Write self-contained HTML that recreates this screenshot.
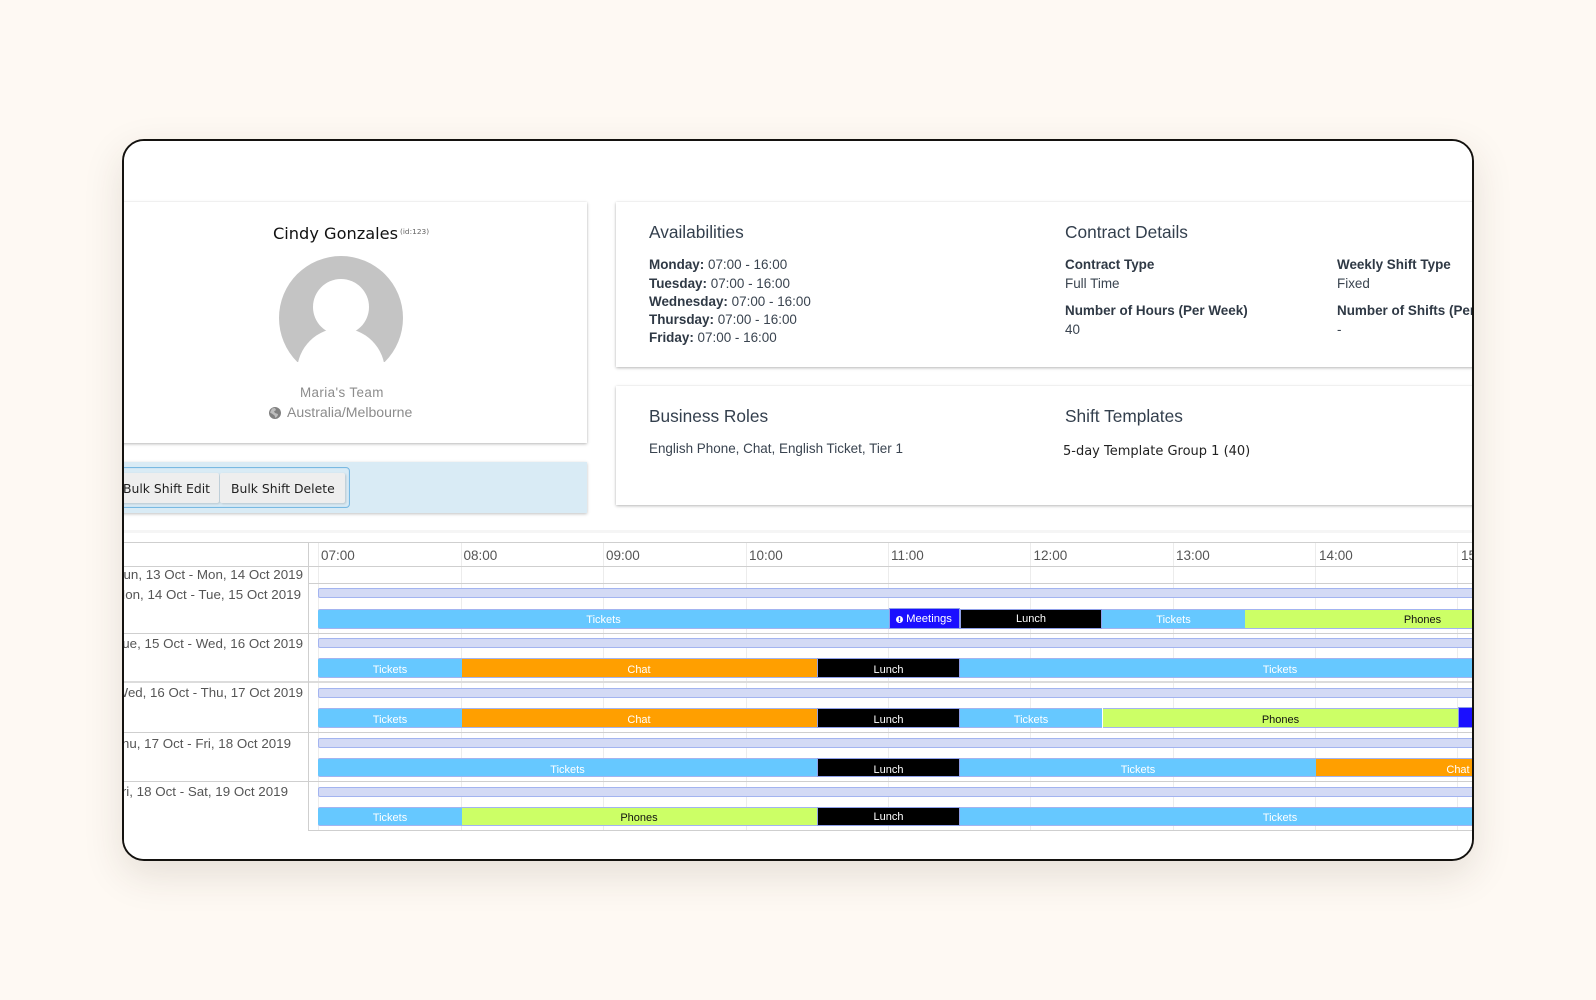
<!DOCTYPE html>
<html><head><meta charset="utf-8">
<style>
html,body{margin:0;padding:0;width:1596px;height:1000px;overflow:hidden;background:#fef9f3;}
*{box-sizing:border-box;}
#frame{position:absolute;left:122px;top:139px;width:1352px;height:722px;background:#fff;border:2px solid #14120f;border-radius:22px;box-shadow:0 14px 40px rgba(60,50,30,.13);}
#clip{position:absolute;left:124px;top:141px;width:1348px;height:718px;border-radius:20px;overflow:hidden;background:#fff;font-family:"Liberation Sans",sans-serif;color:#333f4d;}
#in{position:absolute;left:-124px;top:-141px;width:1596px;height:1000px;filter:blur(.3px);}
#in>div,#in>svg{position:absolute;}
.card{background:#fff;box-shadow:0 1px 3px rgba(0,0,0,.28),0 0 2px rgba(0,0,0,.06);}
.t{white-space:nowrap;}
.h{font-size:17.3px;line-height:20px;color:#333f4d;white-space:nowrap;}
.b{font-size:13.45px;line-height:18.2px;color:#3a4450;white-space:nowrap;}
.b b{color:#2f3945;}
.dj{font-family:"DejaVu Sans",sans-serif;white-space:nowrap;}
.ln{background:#cfcfcf;}
.vl{background:#ececec;width:1px;}
.tm{font-size:13.5px;line-height:16px;color:#555;white-space:nowrap;}
.lab{font-size:13.35px;line-height:16px;color:#555;white-space:nowrap;text-align:right;width:320px;}
.thin{left:318.400px;width:1300px;height:10px;background:#d3daf5;border:1px solid #a3b4f0;border-radius:2px;}
.s{height:20px;font-size:11px;line-height:20px;text-align:center;white-space:nowrap;color:#fff;border-top:1px solid #a3b4f0;border-bottom:1px solid #a3b4f0;}
.k{background:#66c8ff;}.c{background:#ff9f00;}.l{background:#000;border:1px solid #8f9fe8;}.p{background:#ccff66;color:#111;}.m{background:#1a0fff;border:1px solid #8f9fe8;}
</style></head><body>
<div id="frame"></div>
<div id="clip"><div id="in">

<!-- profile card -->
<div class="card" style="left:100px;top:202px;width:487px;height:241px;"></div>
<div class="dj" style="left:273px;top:224px;font-size:16.2px;line-height:20px;color:#111;">Cindy Gonzales</div>
<div class="dj" style="left:400px;top:227px;font-size:7.4px;line-height:10px;color:#666;">(id:123)</div>
<svg style="left:278px;top:254px;" width="126" height="126" viewBox="0 0 126 126">
<circle cx="63" cy="64" r="62" fill="#c4c4c4"/>
<circle cx="63" cy="53" r="28" fill="#fff"/>
<circle cx="63" cy="118" r="44" fill="#fff"/>
<rect x="0" y="108" width="126" height="18" fill="#fff"/>
</svg>
<div class="t" style="left:300px;top:385px;width:85px;font-size:13.4px;line-height:16px;color:#8c8c8c;letter-spacing:.4px;">Maria's Team</div>
<svg style="left:269px;top:407px;" width="12" height="12" viewBox="0 0 12 12"><circle cx="6" cy="6" r="6" fill="#808080"/><path d="M3 1.5 6 1 7 3 5 4.500 6 6 9 7 8.500 9 6.500 11 5.500 8.500 3.500 7 1 5.500z" fill="#bdbdbd"/></svg>
<div class="t" style="left:287px;top:404px;font-size:14.1px;line-height:16px;color:#8c8c8c;">Australia/Melbourne</div>

<!-- blue strip -->
<div style="left:100px;top:462px;width:487px;height:51px;background:#d9ebf5;box-shadow:0 1px 3px rgba(0,0,0,.25);"></div>
<div style="left:100px;top:467px;width:250px;height:41px;border:1px solid #79b9e2;border-radius:4px;box-shadow:inset 0 0 0 1px #cfe5f3;"></div>
<div class="dj" style="left:100px;top:473px;width:119px;height:30px;background:#eee;border-radius:2px;box-shadow:1px 1px 2px rgba(0,0,0,.16);font-size:12.4px;line-height:32px;padding-left:23px;color:#222;">Bulk Shift Edit</div>
<div class="dj" style="left:220px;top:473px;width:125px;height:30px;background:#eee;border-radius:2px;box-shadow:1px 1px 2px rgba(0,0,0,.16);font-size:12.4px;line-height:32px;padding-left:11px;color:#222;">Bulk Shift Delete</div>

<!-- availabilities card -->
<div class="card" style="left:616px;top:202px;width:1000px;height:165px;"></div>
<div class="h" style="left:649px;top:222px;">Availabilities</div>
<div class="b" style="left:649px;top:256.400px;"><b>Monday:</b> 07:00 - 16:00<br><b>Tuesday:</b> 07:00 - 16:00<br><b>Wednesday:</b> 07:00 - 16:00<br><b>Thursday:</b> 07:00 - 16:00<br><b>Friday:</b> 07:00 - 16:00</div>
<div class="h" style="left:1065px;top:222px;">Contract Details</div>
<div class="b" style="left:1065px;top:256.400px;"><b>Contract Type</b><br>Full Time</div>
<div class="b" style="left:1337px;top:256.400px;"><b>Weekly Shift Type</b><br>Fixed</div>
<div class="b" style="left:1065px;top:302.400px;"><b>Number of Hours (Per Week)</b><br>40</div>
<div class="b" style="left:1337px;top:302.400px;"><b>Number of Shifts (Per Week)</b><br>-</div>

<!-- roles card -->
<div class="card" style="left:616px;top:386px;width:1000px;height:119px;"></div>
<div class="h" style="left:649px;top:406px;">Business Roles</div>
<div class="b" style="left:649px;top:440px;">English Phone, Chat, English Ticket, Tier 1</div>
<div class="h" style="left:1065px;top:406px;">Shift Templates</div>
<div class="dj" style="left:1063px;top:443px;font-size:13px;line-height:18px;color:#222;">5-day Template Group 1 (40)</div>

<!-- timeline -->
<div style="left:124px;top:530px;width:1350px;height:3px;background:#f5f5f5;"></div>
<div class="vl" style="left:318px;top:543px;height:288px;"></div>
<div class="vl" style="left:461px;top:543px;height:288px;"></div>
<div class="vl" style="left:603px;top:543px;height:288px;"></div>
<div class="vl" style="left:746px;top:543px;height:288px;"></div>
<div class="vl" style="left:888px;top:543px;height:288px;"></div>
<div class="vl" style="left:1030px;top:543px;height:288px;"></div>
<div class="vl" style="left:1173px;top:543px;height:288px;"></div>
<div class="vl" style="left:1315px;top:543px;height:288px;"></div>
<div class="vl" style="left:1457px;top:543px;height:288px;"></div>

<div class="ln" style="left:124px;top:542px;width:1350px;height:1px;"></div>
<div class="ln" style="left:124px;top:566px;width:1350px;height:1px;"></div>
<div class="ln" style="left:308px;top:583px;width:1170px;height:1px;"></div>
<div class="ln" style="left:124px;top:633px;width:1350px;height:1px;"></div>
<div class="ln" style="left:124px;top:681px;width:1350px;height:2px;background:#dcdcdc;"></div>
<div class="ln" style="left:124px;top:732px;width:1350px;height:1px;"></div>
<div class="ln" style="left:124px;top:781px;width:1350px;height:1px;"></div>
<div class="ln" style="left:308px;top:830px;width:1170px;height:1px;"></div>
<div class="ln" style="left:308px;top:542px;width:1px;height:289px;"></div>

<div class="tm" style="left:321px;top:548px;">07:00</div>
<div class="tm" style="left:463.500px;top:548px;">08:00</div>
<div class="tm" style="left:606px;top:548px;">09:00</div>
<div class="tm" style="left:749px;top:548px;">10:00</div>
<div class="tm" style="left:891px;top:548px;">11:00</div>
<div class="tm" style="left:1033.500px;top:548px;">12:00</div>
<div class="tm" style="left:1176px;top:548px;">13:00</div>
<div class="tm" style="left:1319px;top:548px;">14:00</div>
<div class="tm" style="left:1461px;top:548px;">15:00</div>

<div class="lab" style="left:-17px;top:567px;">Sun, 13 Oct - Mon, 14 Oct 2019</div>
<div class="lab" style="left:-19px;top:587px;">Mon, 14 Oct - Tue, 15 Oct 2019</div>
<div class="lab" style="left:-17px;top:636px;">Tue, 15 Oct - Wed, 16 Oct 2019</div>
<div class="lab" style="left:-17px;top:685px;font-size:13.25px;">Wed, 16 Oct - Thu, 17 Oct 2019</div>
<div class="lab" style="left:-29px;top:736px;">Thu, 17 Oct - Fri, 18 Oct 2019</div>
<div class="lab" style="left:-32px;top:784px;">Fri, 18 Oct - Sat, 19 Oct 2019</div>

<div class="thin" style="top:588px;"></div>
<div class="thin" style="top:638px;"></div>
<div class="thin" style="top:688px;"></div>
<div class="thin" style="top:738px;"></div>
<div class="thin" style="top:787px;"></div>

<!-- row 1 -->
<div class="s k" style="left:318px;top:609px;width:571px;line-height:21px;border-radius:2px 0 0 2px;">Tickets</div>
<div class="s m" style="left:888.500px;top:608px;width:71px;height:21px;line-height:21px;font-size:11.3px;"><svg width="7" height="7" viewBox="0 0 8 8" style="vertical-align:-0.5px;margin-right:3px;"><circle cx="4" cy="4" r="4" fill="#fff"/><rect x="3.200" y="1.500" width="1.600" height="3.500" fill="#1a0fff"/><rect x="3.200" y="5.500" width="1.600" height="1.300" fill="#1a0fff"/></svg>Meetings</div>
<div class="s l" style="left:960px;top:609px;width:142px;line-height:19px;">Lunch</div>
<div class="s k" style="left:1102px;top:609px;width:143px;line-height:21px;">Tickets</div>
<div class="s p" style="left:1245px;top:609px;width:355px;line-height:21px;">Phones</div>
<!-- row 2 -->
<div class="s k" style="left:318px;top:658px;width:144px;line-height:23px;border-radius:2px 0 0 2px;">Tickets</div>
<div class="s c" style="left:462px;top:658px;width:355px;line-height:23px;padding-right:1px;">Chat</div>
<div class="s l" style="left:817px;top:658px;width:143px;line-height:22px;">Lunch</div>
<div class="s k" style="left:960px;top:658px;width:640px;line-height:23px;">Tickets</div>
<!-- row 3 -->
<div class="s k" style="left:318px;top:708px;width:144px;line-height:23px;border-radius:2px 0 0 2px;">Tickets</div>
<div class="s c" style="left:462px;top:708px;width:355px;line-height:23px;padding-right:1px;">Chat</div>
<div class="s l" style="left:817px;top:708px;width:143px;line-height:22px;">Lunch</div>
<div class="s k" style="left:960px;top:708px;width:142px;line-height:23px;">Tickets</div>
<div class="s p" style="left:1103px;top:708px;width:355px;line-height:23px;">Phones</div>
<div class="s m" style="left:1458px;top:707px;width:142px;height:21px;"></div>
<!-- row 4 -->
<div class="s k" style="left:318px;top:758px;width:499px;height:19px;line-height:23px;border-radius:2px 0 0 2px;">Tickets</div>
<div class="s l" style="left:817px;top:758px;width:143px;height:19px;line-height:23px;">Lunch</div>
<div class="s k" style="left:960px;top:758px;width:356px;height:19px;line-height:23px;">Tickets</div>
<div class="s c" style="left:1316px;top:758px;width:284px;height:19px;line-height:23px;">Chat</div>
<!-- row 5 -->
<div class="s k" style="left:318px;top:807px;width:144px;height:19px;line-height:20px;border-radius:2px 0 0 2px;">Tickets</div>
<div class="s p" style="left:462px;top:807px;width:355px;height:19px;line-height:20px;padding-right:1px;">Phones</div>
<div class="s l" style="left:817px;top:807px;width:143px;height:19px;line-height:19px;">Lunch</div>
<div class="s k" style="left:960px;top:807px;width:640px;height:19px;line-height:20px;">Tickets</div>
</div></div>
</body></html>
